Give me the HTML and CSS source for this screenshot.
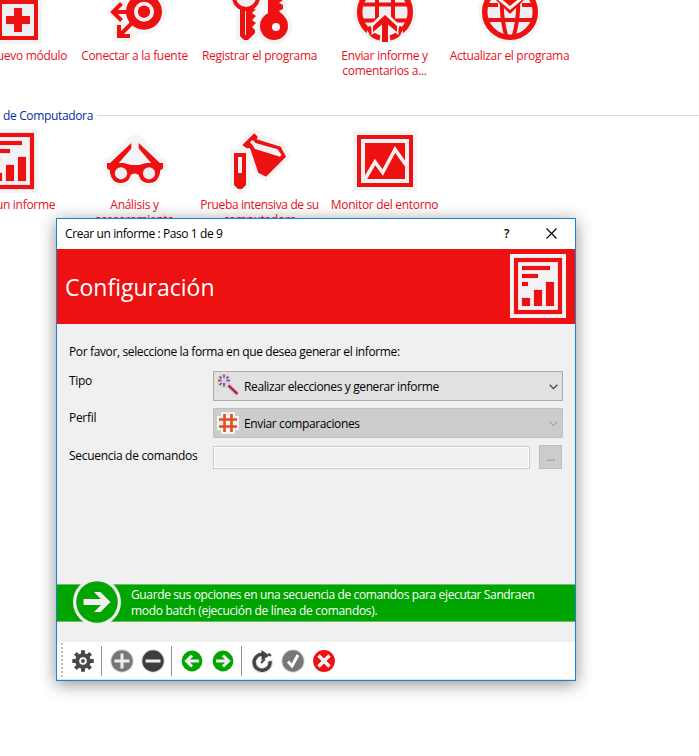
FILE: index.html
```html
<!DOCTYPE html>
<html lang="es">
<head>
<meta charset="utf-8">
<title>Crear un informe</title>
<link rel="stylesheet" href="styles.css">
</head>
<body>
<svg class="defs" aria-hidden="true">
  <symbol id="report" viewBox="0 0 56 64">
    <path fill="#f3f2f4" d="M0 0h56v64H0z"/>
    <path fill="none" stroke="#f3c9ce" stroke-width="5" d="M6 6h44v52H6z"/>
    <path fill="none" stroke="#e11" stroke-width="4" d="M6 6h44v52H6z"/>
    <path fill="#e11" stroke="#f3c9ce" stroke-width="1" paint-order="stroke" d="M12 12h28v4H12zM12 20h16v4H12zM12 28h6v4h-6zM12 44h8v8h-8zM24 36h8v16h-8zM36 28h8v24h-8z"/>
  </symbol>
</svg>
<main class="desktop">
  <section class="group">
    <div class="tile">
      <svg class="icon" viewBox="0 0 64 64"><path fill="#f4f4f4" d="M16 16h48v48H16z"/><path fill="#efeef1" stroke="#e11" stroke-width="4" d="M22 22h36v36H22z"/><path fill="#e11" d="M36 28h8v8h8v8h-8v8h-8v-8h-8v-8h8z"/></svg>
      <span>Añadir nuevo módulo</span>
    </div>
    <div class="tile">
      <svg class="icon" viewBox="0 0 64 64"><g fill="#f4f4f4" stroke="#f4f4f4" stroke-width="8"><circle cx="41" cy="31.700" r="18"/><path d="M9 32l9-9v18zM14 45v13h13l8-9-12-12z"/></g><circle cx="41" cy="31.700" r="18" fill="#e11"/><circle cx="41" cy="31.700" r="10" fill="#efeef1"/><circle cx="41" cy="31.700" r="6.200" fill="#e11"/><path fill="none" stroke="#e11" stroke-width="4" d="M24 32H10M18.500 23.500L10 32l8.500 8.500M31 41L17 55M16 45v11h11"/></svg>
      <span>Conectar a la fuente</span>
    </div>
    <div class="tile">
      <svg class="icon" viewBox="0 0 64 64"><g stroke="#f4f4f4" stroke-width="8" fill="#f4f4f4"><circle cx="18" cy="17" r="13"/><path d="M12 28v28l4 4h4l8-8V26zM40 15h15v20H40z"/><circle cx="46" cy="46" r="14"/></g><circle cx="18" cy="17" r="12" fill="#efeef1" stroke="#e11" stroke-width="4"/><path fill="#e11" d="M12 28l3 1h13l-4 4 4 3-4 4 4 3-4 4 3 3v3l-7 7h-4l-4-4z"/><path stroke="#f0dfe1" stroke-width="1" d="M17.500 31v24"/><path fill="#e11" d="M40 15h15v5l-4 3 4 2v4l-4 2 5 5H40z"/><circle cx="46" cy="46" r="14" fill="#e11"/><circle cx="48" cy="47" r="4" fill="#f4f4f4"/></svg>
      <span>Registrar el programa</span>
    </div>
    <div class="tile">
      <svg class="icon" viewBox="0 0 64 64"><circle cx="32" cy="32" r="31.500" fill="#f4f4f4"/><circle cx="32" cy="32" r="25.300" fill="#efeef1" stroke="#e11" stroke-width="5.500"/><path fill="none" stroke="#e11" stroke-width="4" d="M9 24.500h46M8 40.500h48M24 9v35M40 9v35"/><path fill="#f4f4f4" d="M32 31L14 48v6l8 2v6h20v-6l8-2v-6z"/><path fill="none" stroke="#e11" stroke-width="5" d="M15 47l5 8a26 26 0 0 0 7 3M49 47l-5 8a26 26 0 0 1-7 3"/><path fill="#e11" stroke="#f4f4f4" stroke-width="3" paint-order="stroke" d="M32 35l12 11v6l-9-7.500V62h-6V44.500L20 52v-6z"/></svg>
      <span>Enviar informe y</span><span>comentarios a...</span>
    </div>
    <div class="tile">
      <svg class="icon" viewBox="0 0 64 64"><circle cx="32" cy="32" r="31.500" fill="#f4f4f4"/><circle cx="32" cy="32" r="25.300" fill="#efeef1" stroke="#e11" stroke-width="5.500"/><path fill="none" stroke="#e11" stroke-width="4" d="M7 40h50M24 20q-1 18 4.500 37M40 20q1 18-4.500 37M8 25h12M44 25h12"/><path fill="#e11" d="M17 12h30v7L32 34 17 19z"/><path fill="none" stroke="#f4f4f4" stroke-width="3" d="M15 15l5 3 12 10 12-10 5-3"/></svg>
      <span>Actualizar el programa</span>
    </div>
  </section>
  <h2 class="group-title"><span>de Computadora</span></h2>
  <section class="group">
    <div class="tile">
      <svg class="icon"><use href="#report"/></svg>
      <span>Crear un informe</span>
    </div>
    <div class="tile">
      <svg class="icon" viewBox="0 0 64 64"><path fill="#f4f4f4" d="M0 30h4L26 9l4-3h6l4 3 20 21h4v12h-4l-6 14-8 2h-6l-8-7-8 7h-6l-8-2L4 44 0 42z"/><path fill="#e11" d="M4 34h17l7 2h8l7-2h17v5.500l-3 2V44q-2 10-11.300 10-8 0-10-8-4-3-8 0-2 8-10 8Q9 54 7 44v-2.500l-3-2z"/><path fill="#e11" d="M28.300 14v5.500L15 35H6zM35.700 14v5.500L49 35h9z"/><circle cx="18" cy="44.300" r="6.100" fill="#efeef1"/><circle cx="46" cy="44.300" r="6.100" fill="#efeef1"/></svg>
      <span>Análisis y</span><span>asesoramiento</span>
    </div>
    <div class="tile">
      <svg class="icon" viewBox="0 0 64 64"><path fill="#f4f4f4" stroke="#f4f4f4" stroke-width="8" d="M6 24h12v32l-4 4h-4l-4-4zM14.300 16l12-11.700 3.400 3.400 23 10L58 27.700l-20 20-7.700-4-8.300-24h-3.300z"/><path fill="#e11" d="M6 24h12v32l-4 4h-4l-4-4zM14.300 16l12-11.700 3.400 3.400-1 2.600 24 7.400L58 27.700l-20 20-7.700-4L22 19.300h-3.300z"/><path fill="#f1f1f3" d="M10 28h4v16h-4zM22 13.500l1.500-2 2 0 2 2.500 22 6.300 4 5.400-1.500 2-21.700-6.700-3.300-1-2.500-4z"/></svg>
      <span class="tight">Prueba intensiva de su</span><span>computadora</span>
    </div>
    <div class="tile">
      <svg class="icon" viewBox="0 0 64 64"><path fill="#f4f4f4" d="M0 2h64v60H0z"/><path fill="#efeef1" stroke="#e11" stroke-width="4" d="M6 8h52v48H6z"/><path fill="#e11" d="M12 14h40v36H12z"/><path fill="none" stroke="#f1f1f3" stroke-width="3.600" d="M12 50l10-17 7.700 10.500L42 20.500 53 36"/></svg>
      <span>Monitor del entorno</span>
    </div>
  </section>
</main>

<div class="dialog">
  <header class="titlebar">
    <span class="caption">Crear un informe : Paso 1 de 9</span>
    <span class="help">?</span>
    <svg class="close" viewBox="0 0 11 11"><path d="M.5.5l10 10M10.500.5l-10 10"/></svg>
  </header>
  <div class="banner"><h1>Configuración</h1><svg class="banner-icon"><use href="#report"/></svg></div>
  <div class="body">
    <p class="intro">Por favor, seleccione la forma en que desea generar el informe:</p>
    <div class="row row-type">
      <label>Tipo</label>
      <div class="combo">
        <svg class="combo-icon" viewBox="0 0 24 24"><circle cx="8" cy="8" r="6.500" fill="#c6d6ee"/><path stroke="#c6d6ee" stroke-width="5" d="M10 11l11 10"/><path stroke="#c02348" stroke-width="2.600" d="M12.500 12.500L21.500 21"/><path stroke="#b02c58" stroke-width="1.600" d="M8 1.500v3M8 10v3.500M2 7.500h3.500M10.500 7.500H14M3.500 3.500l2 2M12.500 3.500l-2 2M3.500 12l2-2"/><g fill="#e6e600"><path d="M5 1h1v1H5zM11 1h1v1h-1zM1 5h1v1H1zM14 5h1v1h-1zM1 10h1v1H1zM5 14h1v1H5zM14 11h1v1h-1zM10 15h1v1h-1zM19 15h1v1h-1zM16 20h1v1h-1z"/></g></svg>
        <span class="tight">Realizar elecciones y generar informe</span>
        <svg class="arrow" viewBox="0 0 9 6"><path d="M.7.8l3.800 3.800L8.300.8"/></svg>
      </div>
    </div>
    <div class="row row-profile">
      <label>Perfil</label>
      <div class="combo disabled">
        <svg class="combo-icon" viewBox="0 0 24 24"><path fill="#f4f2f0" d="M5 1h14v4h4v14h-4v4H5v-4H1V5h4z"/><path stroke="#dc5228" stroke-width="2.600" fill="none" d="M8.500 3v18M15.500 3v18M3 8.500h18M3 15.500h18"/></svg>
        <span class="tight">Enviar comparaciones</span>
        <svg class="arrow" viewBox="0 0 9 6"><path d="M.7.8l3.800 3.800L8.300.8"/></svg>
      </div>
    </div>
    <div class="row row-script">
      <label>Secuencia de comandos</label>
      <div class="field"></div>
      <div class="browse">...</div>
    </div>
    <div class="tip">
      <svg class="tip-icon" viewBox="0 0 48 48"><circle cx="24" cy="24" r="24" fill="#f0f0f0"/><circle cx="24" cy="24" r="20.800" fill="#00a500"/><path fill="#f0f0f0" d="M10.500 21h17.500l-7-7h6.500l10 10-10 10H21l7-7H10.500z"/></svg>
      <p>Guarde sus opciones en una secuencia de comandos para ejecutar Sandraen<br><span class="normal">modo batch (ejecución de línea de comandos).</span></p>
    </div>
  </div>
  <footer class="toolbar">
    <i class="grip"></i>
    <svg class="tool gear" viewBox="0 0 24 24"><circle cx="12" cy="12" r="5.800" fill="none" stroke="#484848" stroke-width="4"/><path stroke="#484848" stroke-width="4" d="M12 1.300v4M12 18.700v4M1.300 12h4M18.700 12h4M4.400 4.400l2.800 2.800M16.800 16.800l2.800 2.800M19.600 4.400l-2.800 2.800M7.200 16.800l-2.800 2.800"/><circle cx="12" cy="12" r="1.900" fill="#484848"/></svg>
    <i class="sep"></i>
    <svg class="tool plus" viewBox="0 0 24 24"><circle cx="12" cy="12" r="11.700" fill="#ddd"/><circle cx="12" cy="12" r="10.700" fill="#777"/><path stroke="#eee" stroke-width="3" d="M4.500 12h15M12 4.500v15"/></svg>
    <svg class="tool minus" viewBox="0 0 24 24"><circle cx="12" cy="12" r="11.700" fill="#ddd"/><circle cx="12" cy="12" r="10.700" fill="#3d3d3d"/><path stroke="#eee" stroke-width="3" d="M4.500 12h15"/></svg>
    <i class="sep"></i>
    <svg class="tool back" viewBox="0 0 24 24"><circle cx="12" cy="12" r="10.400" fill="#00a500"/><path fill="none" stroke="#eee" stroke-width="3" d="M19 12H7M12 6.500L6.500 12l5.500 5.500"/></svg>
    <svg class="tool next" viewBox="0 0 24 24"><circle cx="12" cy="12" r="10.400" fill="#00a500"/><path fill="none" stroke="#eee" stroke-width="3" d="M5 12h12M12 6.500l5.500 5.500-5.500 5.500"/></svg>
    <i class="sep"></i>
    <svg class="tool refresh" viewBox="0 0 24 24"><path fill="none" stroke="#ddd" stroke-width="5.500" d="M7 7.500a8 8 0 1 0 13 4"/><path fill="none" stroke="#444" stroke-width="3.400" d="M12 5.300a8 8 0 1 0 8 7"/><path fill="#444" d="M11.500 1l8 5.500-8 5z"/><path fill="none" stroke="#444" stroke-width="1.800" d="M11 14l4-4M18.500 4.500l2.500 2.500"/></svg>
    <svg class="tool check" viewBox="0 0 24 24"><circle cx="12" cy="12" r="11.700" fill="#ddd"/><circle cx="12" cy="12" r="10.700" fill="#777"/><path fill="none" stroke="#fff" stroke-width="3" d="M7 12.500l4 4.500 6-11"/></svg>
    <svg class="tool cancel" viewBox="0 0 24 24"><circle cx="12" cy="12" r="10.900" fill="#e11"/><path stroke="#f6f6f6" stroke-width="3.600" d="M6.500 6.500l11 11M17.500 6.500l-11 11"/></svg>
  </footer>
</div>
</body>
</html>
```
FILE: styles.css
```css
* { box-sizing: border-box; }
html, body { margin: 0; height: 756px; overflow: hidden; background: #fff; }
body { position: relative; font: 12px/15px "Open Sans", "Noto Sans", sans-serif; color: #000; letter-spacing: -0.3px; }
svg { display: block; flex: none; }
.defs { position: absolute; width: 0; height: 0; }
.tight { letter-spacing: -0.38px; }

.desktop { height: 756px; overflow: hidden; }
.group { display: grid; grid-template-columns: repeat(5, 125px); margin-left: -53px; height: 128px; }
.group:first-child { margin-top: -20px; }
.tile { display: flex; flex-direction: column; align-items: center; color: #e8101c; white-space: nowrap; }
.icon { width: 64px; height: 64px; margin-bottom: 4px; }
.group-title { display: flex; align-items: center; height: 16px; margin: 0 0 5px 3px; font-size: 12px; font-weight: 400; line-height: 16px; color: #03309a; letter-spacing: -0.35px; }
.group-title::after { content: ""; flex: 1; height: 1px; margin: -2px 0 0 4px; background: #dadae8; }

.dialog { position: absolute; left: 56px; top: 218px; width: 520px; height: 463px; display: flex; flex-direction: column; border: 1px solid #1c82d4; background: #f0f0f0; box-shadow: 0 3px 16px rgba(0,0,0,.45); }
.titlebar { display: flex; align-items: center; height: 30px; padding: 0 18px 2px 8px; background: #fff; }
.caption { flex: 1; letter-spacing: -0.4px; }
.help { width: 9px; text-align: center; font-weight: 600; margin-right: 35px; }
.close { width: 11px; height: 11px; }
.close path { stroke: #000; stroke-width: 1.1; fill: none; }
.banner { display: flex; align-items: center; justify-content: space-between; height: 75px; padding: 0 9px 0 8px; background: #e11; }
.banner h1 { margin: 0; font-size: 23px; line-height: 32px; font-weight: 400; color: #fff; letter-spacing: 0; }
.banner-icon { width: 56px; height: 64px; margin-top: -1px; }

.body { display: flex; flex-direction: column; height: 318px; padding-left: 12px; white-space: nowrap; }
.intro { margin: 20px 0 19px; line-height: 16px; letter-spacing: -0.37px; }
.row { display: flex; align-items: flex-start; }
.row label { width: 144px; line-height: 16px; }
.row-type { height: 37px; margin-top: -8px; }
.row-type label, .row-profile label { margin-top: 2px; }
.row-profile { height: 37px; }
.row-script label { margin-top: 3px; }
.combo { display: flex; align-items: center; width: 350px; height: 30px; padding: 0 4px 0 2px; border: 1px solid #adadad; background: #e1e1e1; }
.combo span { flex: 1; margin-left: 4px; padding-top: 1px; }
.combo-icon { width: 24px; height: 24px; }
.row-type .combo-icon { margin-top: -2px; }
.arrow { width: 9px; height: 6px; margin-top: 1px; }
.arrow path { fill: none; stroke: #444; stroke-width: 1.3; }
.disabled { background: #ccc; border-color: #bfbfbf; }
.disabled .arrow path { stroke: #aaa; }
.field { width: 317px; height: 23px; margin: 1px 9px 0 0; border: 1px solid #ccc; box-shadow: inset 0 0 0 1px #fff; }
.browse { width: 23px; height: 24px; border: 1px solid #bfbfbf; background: #ccc; color: #838383; text-align: center; line-height: 22px; }
.tip { display: flex; align-items: center; height: 38px; margin: 115px 0 0 -12px; padding-left: 16px; background: #00a500; border: solid #63c563; border-width: 1px 0; color: #fff; }
.tip-icon { width: 48px; height: 48px; margin: -6px 10px -4px 0; }
.tip p { margin: 0; line-height: 16px; letter-spacing: -0.37px; }
.normal { letter-spacing: -0.3px; }

.toolbar { display: flex; align-items: center; height: 38px; padding-left: 4px; background: #fff; border-bottom: 1px solid #e2e2e2; }
.grip { width: 2px; height: 36px; background: repeating-linear-gradient(#bbb 0 2px, #fff 2px 4px); }
.tool { width: 24px; height: 24px; }
.gear { margin: 0 6px 0 8px; }
.sep { width: 1px; height: 30px; background: #919191; }
.plus, .back, .refresh { margin: 0 7px 0 8px; }
.minus, .next { margin-right: 6px; }
.check { margin-right: 7px; }
```
